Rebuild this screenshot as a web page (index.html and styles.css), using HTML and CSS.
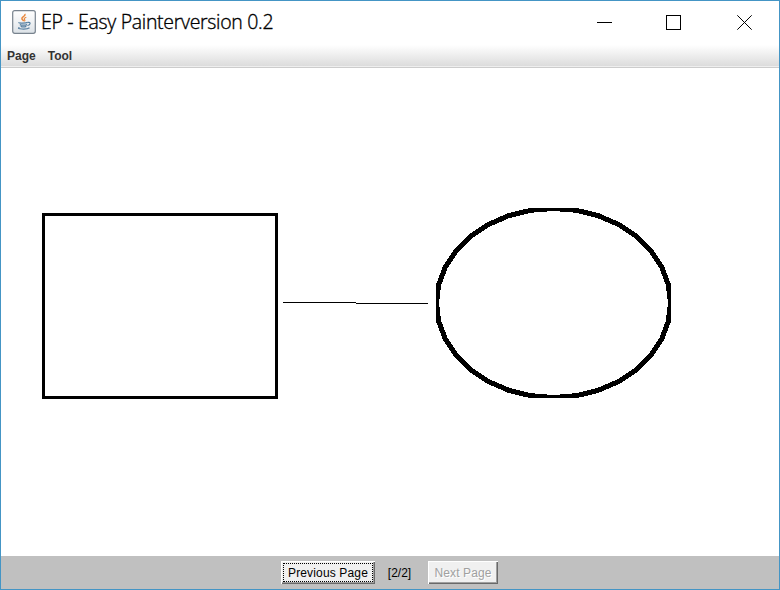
FILE: index.html
```html
<!DOCTYPE html>
<html lang="en">
<head>
<meta charset="utf-8">
<title>EP - Easy Painter</title>
<link rel="stylesheet" href="styles.css">
</head>
<body>
<div class="window">
  <header class="titlebar">
    <svg class="app-icon" viewBox="0 0 24 24">
      <defs><linearGradient id="tile" x1="0" y1="0" x2="0" y2="1"><stop offset="0" stop-color="#fff"/><stop offset=".5" stop-color="#f0f2f4"/><stop offset="1" stop-color="#dce2e7"/></linearGradient></defs>
      <rect x=".7" y=".7" width="22.6" height="22.6" rx="2" fill="url(#tile)" stroke="#78838e" stroke-width="1.2"/>
      <path d="M12.7 4c1.500 2-3.500 2.900-2.800 4.700.3 1 1.600 1.600 1.500 2.600" fill="none" stroke="#e8863a" stroke-width="1.500"/>
      <path d="M14.300 7.200c-2.300 1-2.400 1.800-1.600 2.700.5.600 0 1-.5 1.400" fill="none" stroke="#e8863a" stroke-width="1.100"/>
      <path d="M6.800 12.400c-.5.900 7 1 9 0M7.800 14.600c1.500.8 5.500.8 7.300 0M8.700 16.400c1.500.6 4 .6 5.600 0M16 12.400c3-.5 2.600 2.500-.5 3.100M7.500 17.500c-4.500 1.500 7.500 2.400 10 .2" fill="none" stroke="#557e9f" stroke-width="1.200"/>
    </svg>
    <span class="title">EP - Easy Painterversion 0.2</span>
    <svg class="controls" viewBox="0 0 156 16" shape-rendering="crispEdges">
      <path d="M0 7.5h15M69.500.5h14v14h-14z" fill="none" stroke="#000"/>
      <path d="M140.300.3l14.400 14.400M154.700.3l-14.400 14.400" fill="none" stroke="#000" shape-rendering="auto"/>
    </svg>
  </header>
  <nav class="menubar"><span>Page</span><span>Tool</span></nav>
  <main class="canvas">
    <svg viewBox="1 68 778 488" width="778" height="488" shape-rendering="crispEdges">
      <defs><clipPath id="oval-bounds"><rect x="436" y="208" width="235" height="190"/></clipPath></defs>
      <rect x="43.5" y="214.500" width="233" height="183" fill="none" stroke="#000" stroke-width="3"/>
      <path d="M283 302h73v1h-73zM356 303h72v1h-72z"/>
      <g clip-path="url(#oval-bounds)">
        <polygon transform="translate(553.5 303)" fill="none" stroke="#000" stroke-width="5" points="0,-94.5 22.8,-92.7 44.8,-87.3 65,-78.6 82.7,-66.8 97.3,-52.5 108.1,-36.2 114.8,-18.4 117,0 114.8,18.4 108.1,36.2 97.3,52.5 82.7,66.8 65,78.6 44.8,87.3 22.8,92.7 0,94.5 -22.8,92.7 -44.8,87.3 -65,78.6 -82.7,66.8 -97.3,52.5 -108.1,36.2 -114.8,18.4 -117,0 -114.8,-18.4 -108.1,-36.2 -97.3,-52.5 -82.7,-66.8 -65,-78.6 -44.8,-87.3 -22.8,-92.7"/>
      </g>
    </svg>
  </main>
  <footer class="pager">
    <button class="btn previous"><span>Previous Page</span></button>
    <span class="count">[2/2]</span>
    <button class="btn next" disabled><span>Next Page</span></button>
  </footer>
</div>
</body>
</html>
```
FILE: styles.css
```css
* { box-sizing: border-box; }
body { margin: 0; background: #fff; font-family: "Liberation Sans", Arial, sans-serif; }
.window { width: 780px; height: 590px; border: 1px solid #4495c5; display: flex; flex-direction: column; }
.titlebar { height: 44px; flex: none; display: flex; align-items: center; padding: 0 26px 0 11px; }
.app-icon { width: 24px; height: 24px; margin-top: -3px; }
.title { font: 300 19.5px/28px "Open Sans", "Noto Sans", sans-serif; margin: -2px 0 0 5px; white-space: nowrap; letter-spacing: -.31px; color: #000; -webkit-text-stroke: .35px #000; }
.controls { width: 156px; height: 16px; margin: -1px 0 0 auto; }
.menubar { height: 23px; flex: none; display: flex; gap: 12px; padding: 4px 6px 0; font-size: 12px; line-height: 15px; font-weight: bold; color: #333; background: linear-gradient(#fff, #dadada); border-bottom: 1px solid #ccc; box-shadow: inset 0 -1px #eee; }
.canvas { height: 488px; flex: none; }
.canvas svg { display: block; }
.pager { height: 33px; flex: none; display: flex; justify-content: flex-start; align-items: flex-start; padding: 5px 0 0 280px; background: #c0c0c0; font-size: 12px; }
.btn { height: 23px; padding: 1px; border: 0; background: #f0f0f0; box-shadow: inset 1px 1px #fff, inset -1px -1px #696969, inset -2px -2px #a0a0a0; font: 12px/19px "Liberation Sans", Arial, sans-serif; color: #000; }
.btn span { display: block; height: 19px; padding-top: 1px; white-space: nowrap; }
.previous { width: 94px; letter-spacing: .15px; }
.previous span { margin: 0 1px; border: 1px dotted #000; line-height: 17px; }
.next { width: 70px; letter-spacing: .1px; }
.next:disabled { color: #a0a0a0; text-shadow: 1px 1px #fff; }
.count { width: 53px; padding-right: 4px; text-align: center; line-height: 24px; }
```
